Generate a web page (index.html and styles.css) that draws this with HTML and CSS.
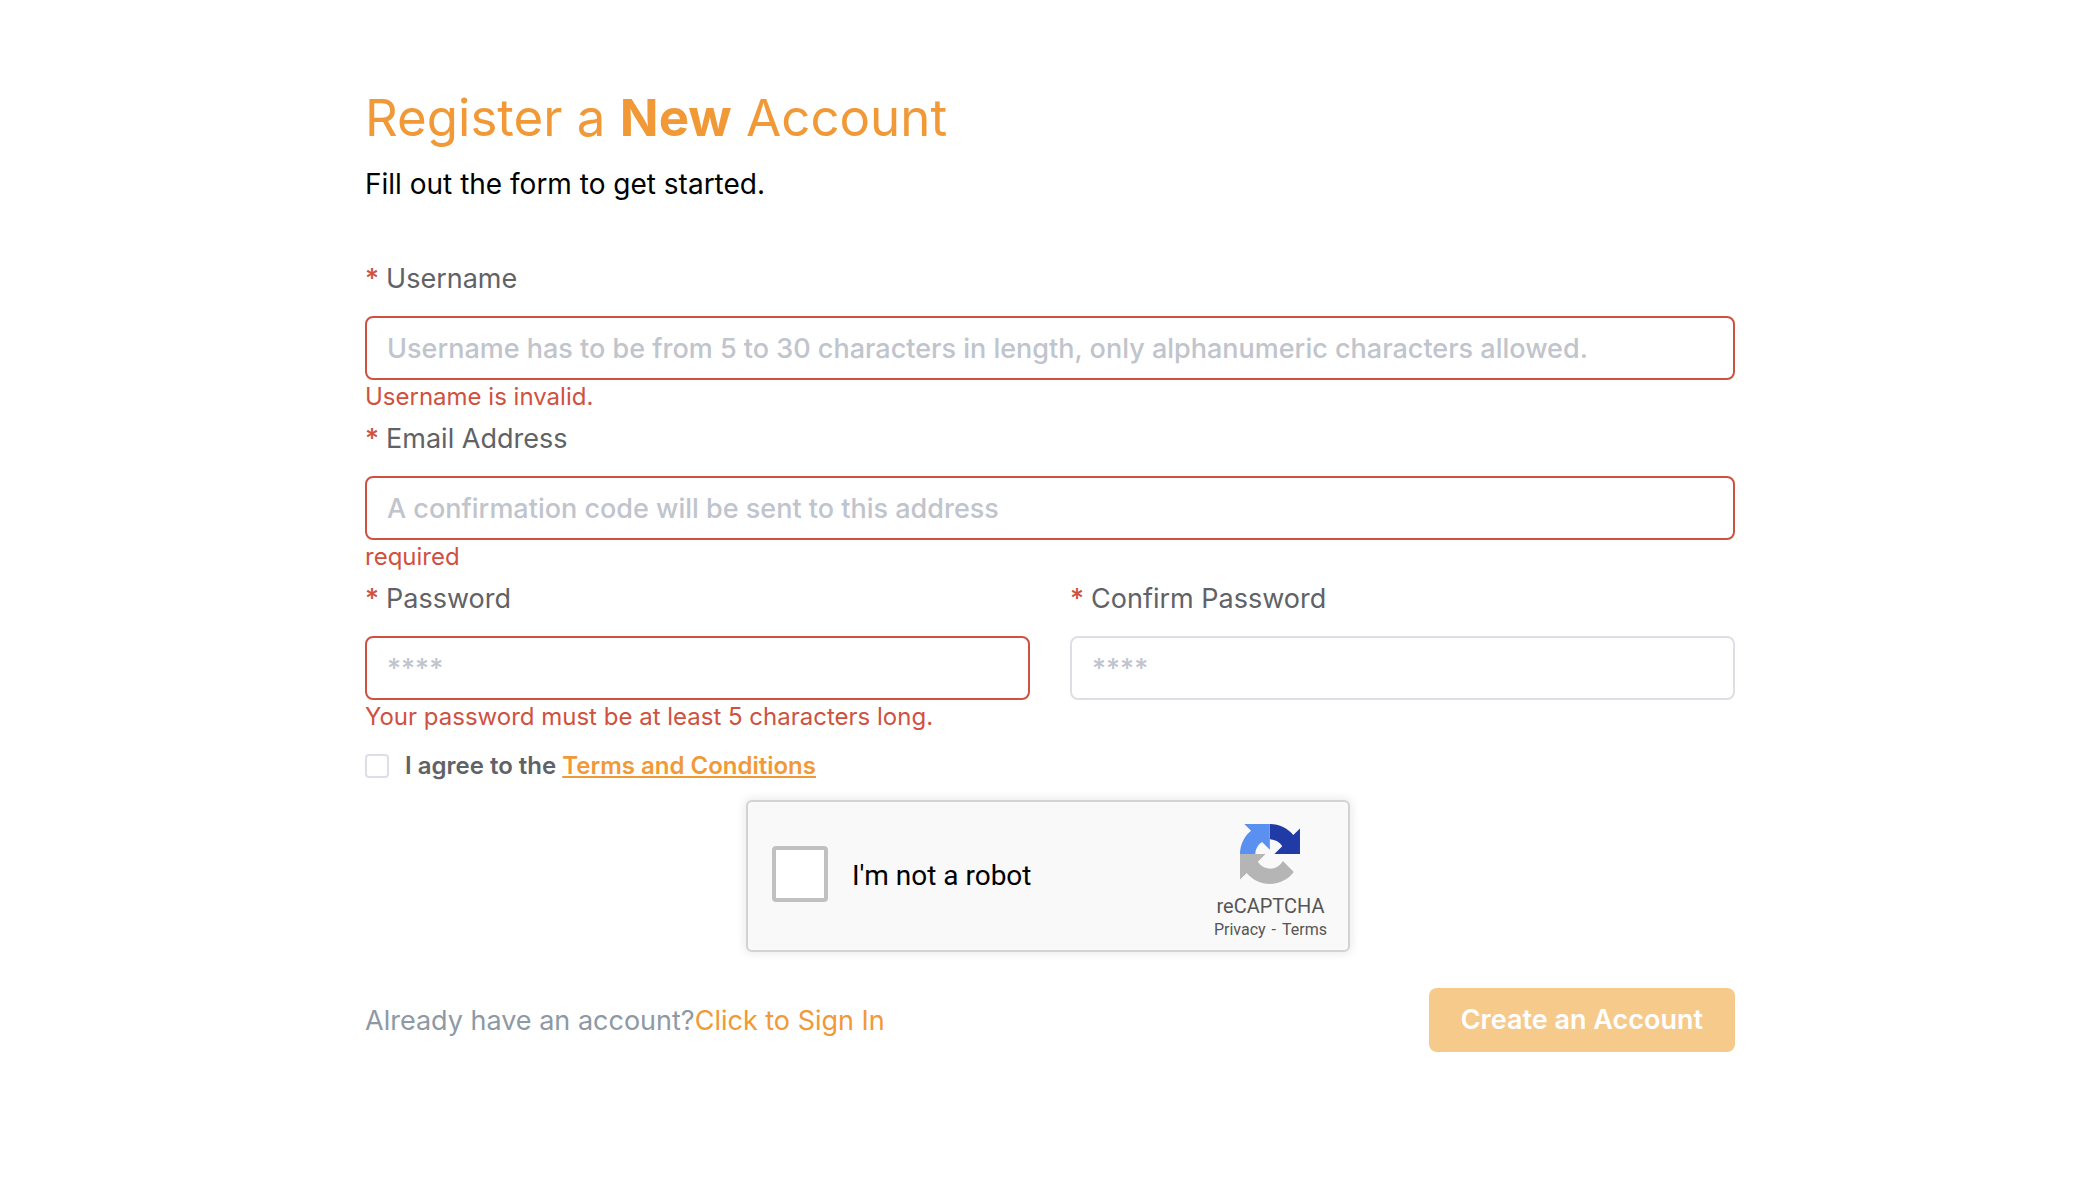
FILE: index.html
```html
<!DOCTYPE html>
<html lang="en">
<head>
  <meta charset="utf-8">
  <meta name="viewport" content="width=device-width, initial-scale=1">
  <title>Register a New Account</title>
  <link rel="stylesheet" href="styles.css">
</head>
<body>
  <main class="page">
    <form class="register" novalidate>
      <header class="intro">
        <h1 class="title">Register a <strong>New</strong> Account</h1>
        <p class="subtitle">Fill out the form to get started.</p>
      </header>

      <div class="field">
        <label class="label" for="username"><span class="required">*</span>Username</label>
        <input class="input invalid" id="username" type="text" placeholder="Username has to be from 5 to 30 characters in length, only alphanumeric characters allowed.">
        <p class="error">Username is invalid.</p>
      </div>

      <div class="field">
        <label class="label" for="email"><span class="required">*</span>Email Address</label>
        <input class="input invalid" id="email" type="email" placeholder="A confirmation code will be sent to this address">
        <p class="error">required</p>
      </div>

      <div class="columns">
        <div class="field">
          <label class="label" for="password"><span class="required">*</span>Password</label>
          <input class="input invalid" id="password" type="password" placeholder="****">
          <p class="error">Your password must be at least 5 characters long.</p>
        </div>
        <div class="field">
          <label class="label" for="confirm"><span class="required">*</span>Confirm Password</label>
          <input class="input" id="confirm" type="password" placeholder="****">
        </div>
      </div>

      <div class="agree">
        <input class="agree-box" id="agree" type="checkbox">
        <label for="agree">I agree to the <a class="terms" href="#terms">Terms and Conditions</a></label>
      </div>

      <div class="captcha-frame">
        <div class="captcha">
          <input class="captcha-box" id="robot" type="checkbox">
          <label class="captcha-label" for="robot">I'm not a robot</label>
          <div class="captcha-brand">
            <svg class="captcha-logo" viewBox="0 0 64 64" aria-hidden="true">
              <defs>
                <clipPath id="right-half"><rect x="32" y="0" width="32" height="64"/></clipPath>
                <clipPath id="top-half"><rect x="0" y="0" width="64" height="32"/></clipPath>
              </defs>
              <path clip-path="url(#right-half)" fill="#203ba6" d="M64 31.955l-.033-1.37V4.687l-7.16 7.16C50.948 4.674 42.033.093 32.05.093c-10.4 0-19.622 4.96-25.458 12.64l11.736 11.86a15.55 15.55 0 0 1 4.754-5.334c2.05-1.6 4.952-2.906 8.968-2.906.485 0 .86.057 1.135.163 4.976.393 9.288 3.14 11.828 7.124l-8.307 8.307z"/>
              <path clip-path="url(#top-half)" fill="#5a91f0" d="M31.862.094l-1.37.033H4.594l7.16 7.16C4.58 13.147 0 22.06 0 32.046c0 10.4 4.96 19.622 12.64 25.458L24.5 45.768a15.55 15.55 0 0 1-5.334-4.754c-1.6-2.05-2.906-4.952-2.906-8.968 0-.485.057-.86.163-1.135.393-4.976 3.14-9.288 7.124-11.828l8.307 8.307z"/>
              <path fill="#b5b5b5" d="M.001 32.045l.033 1.37v25.898l7.16-7.16c5.86 7.173 14.774 11.754 24.76 11.754 10.4 0 19.622-4.96 25.458-12.64l-11.736-11.86a15.55 15.55 0 0 1-4.754 5.334c-2.05 1.6-4.952 2.906-8.968 2.906-.485 0-.86-.057-1.135-.163-4.976-.393-9.288-3.14-11.828-7.124l8.307-8.307z"/>
            </svg>
            <span class="captcha-name">reCAPTCHA</span>
            <div class="captcha-links"><a href="#privacy">Privacy</a><span>-</span><a href="#captcha-terms">Terms</a></div>
          </div>
        </div>
      </div>

      <footer class="actions">
        <p class="signin">Already have an account?<a href="#signin">Click to Sign In</a></p>
        <button class="submit" type="submit" disabled>Create an Account</button>
      </footer>
    </form>
  </main>
</body>
</html>
```
FILE: styles.css
```css
* {
  box-sizing: border-box;
}

body {
  margin: 0;
  background: #fff;
  color: #000;
  font-family: Inter, "Liberation Sans", sans-serif;
  font-size: 27px;
  line-height: 40px;
}

h1,
p {
  margin: 0;
}

input {
  margin: 0;
}

.page {
  padding: 86px 0 86px 10px;
}

.register {
  max-width: 1370px;
  margin: 0 auto;
}

.intro {
  margin-bottom: 55px;
}

.title {
  margin-bottom: 14px;
  color: #f19937;
  font-size: 51px;
  font-weight: 400;
  line-height: 64px;
}

.title strong {
  font-weight: 700;
}

.subtitle {
  font-size: 28px;
}

.field {
  display: flex;
  flex-direction: column;
  min-width: 0;
  margin-bottom: 8px;
}

.label {
  margin-bottom: 17px;
  color: #606266;
}

.required {
  margin-right: 7px;
  color: #cf5140;
  font-weight: 500;
}

.input {
  width: 100%;
  height: 64px;
  padding: 0 20px;
  border: 2px solid #dcdfe6;
  border-radius: 8px;
  background: #fff;
  color: #606266;
  font: inherit;
}

.input::placeholder {
  color: #c0c4cc;
  font-weight: 500;
  opacity: 1;
}

.invalid {
  border-color: #cf5140;
}

.error {
  margin-top: 3px;
  color: #cf5140;
  font-size: 24px;
  line-height: 28px;
}

.columns {
  display: grid;
  grid-template-columns: 1fr 1fr;
  column-gap: 40px;
}

.agree {
  display: flex;
  align-items: center;
  gap: 16px;
  margin: 13px 0 20px;
  color: #606266;
  font-size: 24px;
  font-weight: 600;
  line-height: 28px;
}

.agree-box {
  appearance: none;
  flex: none;
  width: 24px;
  height: 24px;
  border: 2px solid #dcdfe6;
  border-radius: 4px;
  background: #fff;
}

a {
  color: #f19937;
  text-decoration: none;
}

.terms {
  text-decoration: underline;
}

.captcha-frame {
  max-width: 608px;
  margin: 0 auto 36px;
  padding-right: 4px;
}

.captcha {
  display: flex;
  align-items: center;
  min-height: 152px;
  padding: 0 21px 4px 24px;
  border: 2px solid #d3d3d3;
  border-radius: 6px;
  background: #f9f9f9;
  box-shadow: 0 0 8px 2px rgba(0, 0, 0, 0.08);
  font-family: Roboto, "Liberation Sans", sans-serif;
}

.captcha-box {
  appearance: none;
  flex: none;
  width: 56px;
  height: 56px;
  border: 4px solid #c1c1c1;
  border-radius: 4px;
  background: #fff;
}

.captcha-label {
  flex: 1;
  margin-left: 24px;
  padding-top: 4px;
  font-size: 28px;
}

.captcha-brand {
  display: flex;
  flex-direction: column;
  align-items: center;
  align-self: flex-start;
  margin-top: 22px;
  color: #555;
}

.captcha-logo {
  width: 60px;
  height: 60px;
  margin-bottom: 10px;
}

.captcha-name {
  font-size: 20px;
  line-height: 24px;
}

.captcha-links {
  display: flex;
  gap: 6px;
  font-size: 16px;
  line-height: 24px;
}

.captcha-links a {
  color: inherit;
}

.actions {
  display: flex;
  align-items: center;
  justify-content: space-between;
}

.signin {
  padding-top: 2px;
  color: #8d99a5;
}

.submit {
  height: 64px;
  padding: 0 32px;
  border: 0;
  border-radius: 8px;
  background: #f6ca8b;
  color: #fff;
  font: inherit;
  font-weight: 600;
}
```
